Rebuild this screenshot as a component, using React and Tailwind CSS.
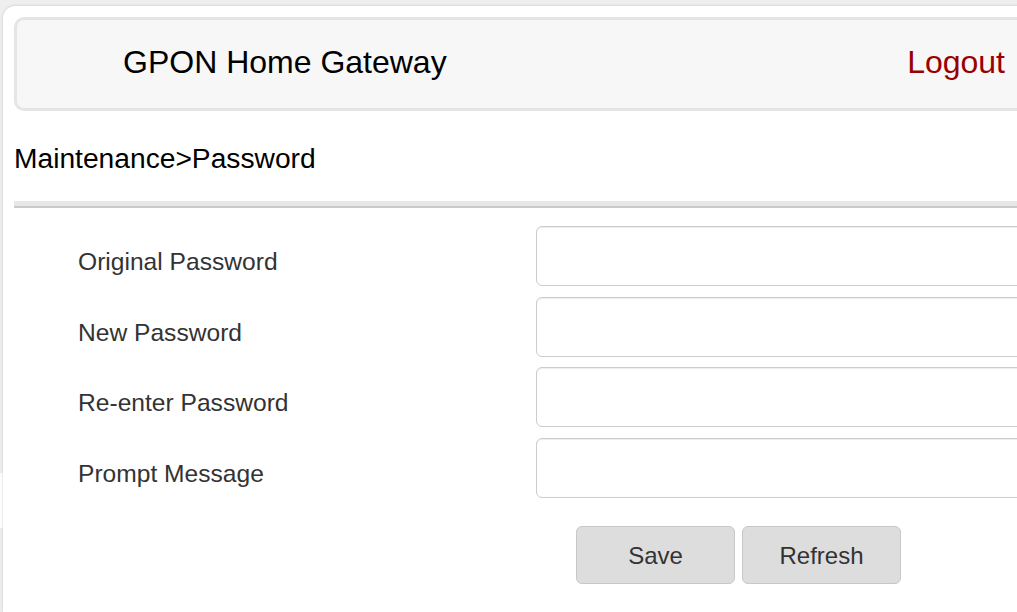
import React from 'react';

const fields = ['Original Password', 'New Password', 'Re-enter Password', 'Prompt Message'];

export default function App() {
  return (
    <div className="h-[612px] w-full overflow-hidden bg-[#efefef] pt-[6px] flex font-['Liberation_Sans',Arial,sans-serif]">
      {/* left frame strip */}
      <div className="w-[3px] shrink-0 flex flex-col">
        <div className="h-[467px]" />
        <div className="h-[55px] bg-white" />
      </div>

      <div className="w-[1030px] shrink-0 bg-white rounded-tl-[12px] shadow-[0_0_3px_rgba(0,0,0,0.18)] pl-[11px] pt-[11px]">
        <div className="h-[94px] w-[1030px] border-[3px] border-[#e5e5e5] rounded-[10px] bg-[#f7f7f7] flex items-center justify-between pl-[106px] pr-[36px] pb-[4px]">
          <span className="text-[32px] text-black">GPON Home Gateway</span>
          <span className="text-[32px] text-[#990000] cursor-pointer">Logout</span>
        </div>

        <div className="mt-[31px] text-[28.2px] leading-[32px] text-black">Maintenance&gt;Password</div>

        <div className="mt-[27px] h-[7px] w-[1030px] bg-[#e7e7e7] border-b-2 border-[#cacaca]" />

        <div className="mt-[18px] flex flex-col gap-[10.6px] w-[1030px]">
          {fields.map((label) => (
            <div key={label} className="flex items-center">
              <div className="w-[522px] shrink-0 pl-[64px] pt-[13px] text-[24.6px] text-[#333]">{label}</div>
              <input
                type={label === 'Prompt Message' ? 'text' : 'password'}
                className="flex-1 h-[60px] border border-[#cccccc] rounded-[6px] bg-white shadow-[inset_0_1px_1px_rgba(0,0,0,0.075)] outline-none px-3 text-[24px]"
              />
            </div>
          ))}
        </div>

        <div className="mt-[28px] pl-[562px] flex gap-[7px]">
          <button className="w-[159px] h-[58px] pt-[2px] bg-[#dddddd] border border-[#c8c8c8] rounded-[6px] text-[24px] text-[#333]">Save</button>
          <button className="w-[159px] h-[58px] pt-[2px] bg-[#dddddd] border border-[#c8c8c8] rounded-[6px] text-[24px] text-[#333]">Refresh</button>
        </div>
      </div>
    </div>
  );
}
